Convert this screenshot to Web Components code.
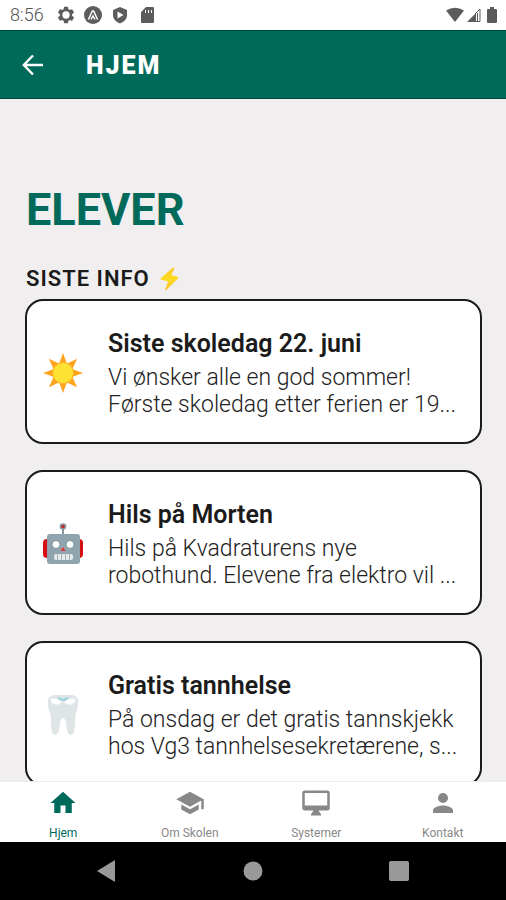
<!DOCTYPE html>
<html lang="no">
<head>
<meta charset="utf-8">
<meta name="viewport" content="width=device-width, initial-scale=1">
<title>Hjem</title>
<style>
  :root { --green: #006a5a; --page: #f0eeef; --icon: #888; }
  * { box-sizing: border-box; }
  body { margin: 0; font-family: Roboto, "Liberation Sans", sans-serif; color: #1b1b1b; background: var(--page); }
</style>
</head>
<body>
<school-app></school-app>

<template id="status-bar">
  <style>
    :host { display: flex; align-items: center; justify-content: space-between; height: 30px; padding: 0 6px 0 10px; background: #fff; color: #5c5c5c; flex: none; }
    time { font-size: 18px; font-weight: 300; line-height: 24px; margin-right: 4px; color: #555; }
    div { display: flex; align-items: center; gap: 2px; }
    .left { gap: 9px; }
    svg { display: block; fill: currentColor; }
  </style>
  <div class="left">
    <time>8:56</time>
    <svg width="18" height="18" viewBox="1 1 22 22"><path fill-rule="evenodd" d="M19.4 13a7 7 0 0 0 0-2l2.2-1.700a.5.5 0 0 0 .1-.6l-2-3.500a.5.5 0 0 0-.6-.2l-2.500 1a7.300 7.300 0 0 0-1.700-1L14.500 2.400a.5.5 0 0 0-.5-.4h-4a.5.5 0 0 0-.5.4L9.100 5a7.700 7.700 0 0 0-1.700 1l-2.500-1a.5.5 0 0 0-.6.2l-2 3.500a.5.5 0 0 0 .1.6L4.600 11a7 7 0 0 0 0 2l-2.200 1.700a.5.5 0 0 0-.1.6l2 3.500c.1.200.4.300.6.200l2.500-1c.5.400 1.100.7 1.700 1l.4 2.600c0 .2.200.4.500.4h4c.2 0 .5-.2.500-.4l.4-2.600a7 7 0 0 0 1.700-1l2.500 1c.2.100.5 0 .6-.2l2-3.500a.5.5 0 0 0-.1-.6zM12 16.500a4.500 4.500 0 1 1 0-9 4.500 4.500 0 0 1 0 9z"/></svg>
    <svg width="18" height="18" viewBox="0 0 18 18"><circle cx="9" cy="9" r="9"/><path d="M4.500 13.500 8.200 5.300Q9 4 9.800 5.300l3.700 8.200M7 13.500l2-3.500 2 3.500" fill="none" stroke="#fff" stroke-width="1.500"/></svg>
    <svg width="18" height="18" viewBox="0 0 18 18"><path fill-rule="evenodd" d="M9 1 2 4v5c0 4 3 7 7 8.500 4-1.500 7-4.500 7-8.500V4zM6.500 5.500v7l6-3.500z"/></svg>
    <svg width="18" height="18" viewBox="0 0 18 18"><path fill-rule="evenodd" d="M8 1h7q1 0 1 1v14q0 1-1 1H4q-1 0-1-1V6zM7 4v3h1V4zm3 0v3h1V4zm3 0v3h1V4z"/></svg>
  </div>
  <div>
    <svg width="18" height="16" viewBox="0 0 18 16"><path d="M0 3.500Q9-2 18 3.500L9 15z"/></svg>
    <svg width="16" height="16" viewBox="1 0 16 16"><path d="M2 15 11 6v9z"/><path d="M10 7l5-5v12.500H4M12.500 6v8" fill="none" stroke="currentColor" stroke-width="1"/></svg>
    <svg width="16" height="16" viewBox="0 0 16 16"><path d="M6 0h4v2h2q1 0 1 1v12q0 1-1 1H4q-1 0-1-1V3q0-1 1-1h2z"/></svg>
  </div>
</template>

<template id="app-header">
  <style>
    :host { display: flex; align-items: center; gap: 40px; height: 69px; padding: 2px 20px 0; background: var(--green); color: #fff; border-top: 1px solid #00493a; border-bottom: 1px solid #00493a; box-sizing: border-box; flex: none; }
    button { all: unset; display: block; cursor: pointer; }
    svg { display: block; }
    h1 { margin: 0; font-size: 25px; font-weight: 900; line-height: 32px; letter-spacing: 2px; }
  </style>
  <button type="button" aria-label="Tilbake"><svg width="26" height="26" viewBox="0 0 26 26" fill="none" stroke="currentColor" stroke-width="2.400"><path d="M23 12H4M13 2.500 3.800 12l9.200 9.500"/></svg></button>
  <h1><slot></slot></h1>
</template>

<template id="info-card">
  <style>
    :host { display: flex; align-items: center; gap: 25px; min-height: 145px; padding: 22px 20px 20px 16px; border: 2px solid #1b1b1b; border-radius: 18px; background: #fff; box-sizing: border-box; }
    ::slotted(svg) { display: block; flex: none; width: 40px; height: 42px; }
    h3 { margin: 0 0 4px; font-size: 25px; font-weight: 600; line-height: 32px; }
    p { margin: 0; font-size: 23px; font-weight: 300; line-height: 27px; color: #222; }
    div { min-width: 0; flex: 1; }
  </style>
  <slot name="icon"></slot>
  <div><h3><slot name="title"></slot></h3><p><slot name="text"></slot></p></div>
</template>

<template id="tab-item">
  <style>
    :host { display: block; flex: 1; min-width: 0; }
    a { display: flex; flex-direction: column; align-items: center; gap: 8px; color: var(--icon); text-decoration: none; font-size: 12px; line-height: 14px; }
    :host([active]) a { color: var(--green); }
    ::slotted(svg) { display: block; width: 30px; height: 30px; fill: currentColor; }
  </style>
  <a href="#"><slot name="icon"></slot><span><slot></slot></span></a>
</template>

<template id="tab-bar">
  <style>:host { display: flex; height: 61px; padding-top: 6px; background: #fff; border-top: 1px solid #ececec; box-sizing: border-box; flex: none; }</style>
  <slot></slot>
</template>

<template id="system-nav">
  <style>
    :host { display: flex; align-items: center; justify-content: center; gap: 126px; height: 58px; background: #000; flex: none; }
    button { all: unset; display: block; cursor: pointer; }
    svg { display: block; fill: #999; }
  </style>
  <button type="button" aria-label="Tilbake"><svg width="20" height="22" viewBox="0 0 20 22"><path d="M18 0v22L0 11z"/></svg></button>
  <button type="button" aria-label="Hjem-knapp"><svg width="20" height="20" viewBox="0 0 20 20"><circle cx="10" cy="10" r="9.500"/></svg></button>
  <button type="button" aria-label="Oversikt"><svg width="20" height="20" viewBox="0 0 20 20"><rect width="20" height="20" rx="2"/></svg></button>
</template>

<template id="school-app">
  <style>
    :host { display: flex; flex-direction: column; height: 100vh; }
    main { flex: 1; min-height: 0; overflow: hidden; padding: 85px 24px 0 25px; }
    h1, h2 { padding-left: 1px; }
    h1 { margin: 0; font-size: 45px; font-weight: 700; line-height: 52px; color: var(--green); }
    h2 { display: flex; align-items: center; gap: 9px; margin: 27px 0 4px; font-size: 22px; font-weight: 600; line-height: 32px; letter-spacing: 1px; }
    h2 svg { display: block; }
    section { display: flex; flex-direction: column; gap: 26px; }
  </style>
  <status-bar></status-bar>
  <app-header>HJEM</app-header>
  <main>
    <h1>ELEVER</h1>
    <h2>SISTE INFO <svg width="22" height="24" viewBox="0 0 22 24" aria-hidden="true"><defs><linearGradient id="b" x2="0" y2="1"><stop offset="0" stop-color="#ffc728"/><stop offset=".5" stop-color="#fddc20"/><stop offset="1" stop-color="#fbc02d"/></linearGradient></defs><path d="M14 .5 1.500 11.500q-.5 1 .6 1.300l7 1.700L6 22.500q0 1.200 1.200.6L19.500 11q.3-1-.7-1.300l-6.500-1.500 3-6.700Q15.200 0 14 .5z" fill="url(#b)"/></svg></h2>
    <section>
      <info-card>
        <svg slot="icon" viewBox="-20 -21 40 42" aria-hidden="true"><g fill="#fea41d"><path d="M-4-9 0-20 4-9z"/><path d="M-4-9 0-20 4-9z" transform="rotate(45)"/><path d="M-4-9 0-20 4-9z" transform="rotate(90)"/><path d="M-4-9 0-20 4-9z" transform="rotate(135)"/><path d="M-4-9 0-20 4-9z" transform="rotate(180)"/><path d="M-4-9 0-20 4-9z" transform="rotate(225)"/><path d="M-4-9 0-20 4-9z" transform="rotate(270)"/><path d="M-4-9 0-20 4-9z" transform="rotate(315)"/></g><circle r="11" fill="#ffb62b"/><circle r="10" fill="#fee233"/></svg>
        <span slot="title">Siste skoledag 22. juni</span>
        <span slot="text">Vi ønsker alle en god sommer!<br>Første skoledag etter ferien er 19...</span>
      </info-card>
      <info-card>
        <svg slot="icon" viewBox="0 0 40 42" aria-hidden="true"><path d="M4 16q-4 0-4 4v11q0 4 4 4zM36 16q4 0 4 4v11q0 4-4 4z" fill="#d50f12"/><path d="M19 5h2v8h-2z" fill="#84969f"/><circle cx="20" cy="3.500" r="3.300" fill="#8499a5"/><circle cx="20" cy="3.500" r="1.700" fill="#c62828"/><rect x="4" y="11" width="33" height="30" rx="3" fill="#90a4ae"/><g fill="#fff" stroke="#7e929d"><circle cx="13" cy="21.500" r="4"/><circle cx="27" cy="21.500" r="4"/></g><path d="M20 24l2.500 4h-5z" fill="#e53935"/><rect x="11" y="31" width="19" height="6" rx="2" fill="#e5e9ea"/><path d="M14.500 31v6m4-6v6m4-6v6m4-6v6" stroke="#a5b4bb"/></svg>
        <span slot="title">Hils på Morten</span>
        <span slot="text">Hils på Kvadraturens nye robothund. Elevene fra elektro vil ...</span>
      </info-card>
      <info-card>
        <svg slot="icon" viewBox="0 0 40 42" aria-hidden="true"><path d="M5 6Q6 1 13 1h14q7 0 8 5 1 6-2 13-1 4-1 9 0 8-2 12-3 2-5-1-2-5-2-10-1-5-3-5t-3 5q0 5-2 10-2 3-5 1-2-4-2-12 0-5-1-9Q4 12 5 6z" fill="#dfe5e7"/><path d="M8 5q5-2 11 3-4 4-8 2-4-2-3-5zM32 5q-5-2-11 3 4 4 8 2 4-2 3-5z" fill="#fff"/><path d="M14 3q3 0 6 2 3-2 6-2-2 4-6 4-4 0-6-4z" fill="#9bd2df"/></svg>
        <span slot="title">Gratis tannhelse</span>
        <span slot="text">På onsdag er det gratis tannskjekk hos Vg3 tannhelsesekretærene, s...</span>
      </info-card>
    </section>
  </main>
  <tab-bar>
    <tab-item active><svg slot="icon" viewBox="0 0 24 24" aria-hidden="true"><path d="M10 20v-6h4v6h5v-8h3L12 3 2 12h3v8z"/></svg>Hjem</tab-item>
    <tab-item><svg slot="icon" viewBox="0 0 24 24" aria-hidden="true"><path d="M5 13.180v4L12 21l7-3.820v-4L12 17zM12 3 1 9l11 6 9-4.910V17h2V9z"/></svg>Om Skolen</tab-item>
    <tab-item><svg slot="icon" viewBox="0 0 24 24" aria-hidden="true"><path d="M21 2H3a2 2 0 0 0-2 2v12c0 1.100.9 2 2 2h7l-2 3v1h8v-1l-2-3h7a2 2 0 0 0 2-2V4a2 2 0 0 0-2-2zm0 12H3V4h18z"/></svg>Systemer</tab-item>
    <tab-item><svg slot="icon" viewBox="0 0 24 24" aria-hidden="true"><path d="M12 12a4 4 0 1 0 0-8 4 4 0 0 0 0 8zm0 2c-2.670 0-8 1.340-8 4v2h16v-2c0-2.660-5.330-4-8-4z"/></svg>Kontakt</tab-item>
  </tab-bar>
  <system-nav></system-nav>
</template>

<script>
  for (const name of ["status-bar", "app-header", "info-card", "tab-item", "tab-bar", "system-nav", "school-app"]) {
    const template = document.getElementById(name);
    customElements.define(name, class extends HTMLElement {
      constructor() {
        super();
        this.attachShadow({ mode: "open" }).append(template.content.cloneNode(true));
      }
    });
  }
</script>
</body>
</html>
